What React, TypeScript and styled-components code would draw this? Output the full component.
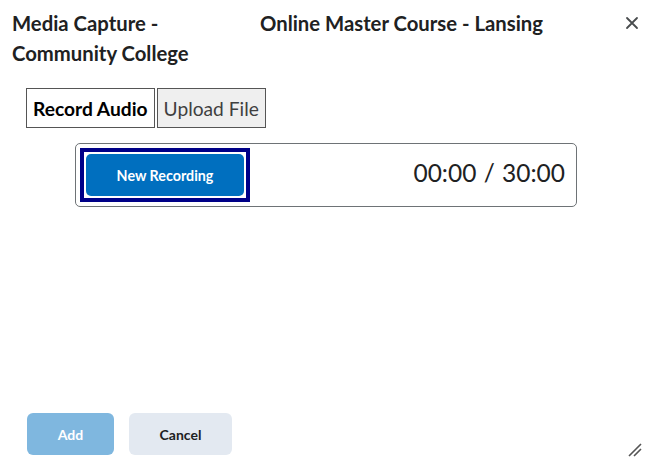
import React, {useState} from 'react';
import styled, {createGlobalStyle} from "styled-components";

const GlobalStyle = createGlobalStyle`
  html, body {
    margin: 0;
    padding: 0;
    background-color: #FFFFFF;
  }
  body {
    font-family: Lato, "Noto Sans", sans-serif;
    color: #202122;
  }
  * {
    box-sizing: border-box;
  }
`;

const DialogWrapper = styled('div')`
  position: relative;
  width: 656px;
  height: 468px;
  display: flex;
  flex-direction: column;
  background-color: #FFFFFF;
`;

const Header = styled('div')`
  display: flex;
  align-items: flex-start;
  padding: 8px 12px 0 12px;
`;

const TitleRow = styled('div')`
  flex: 1;
  display: flex;
  gap: 38px;
`;

const TitlePart = styled('h1')<{ $width?: number }>`
  margin: 0;
  width: ${p => (p.$width ? `${p.$width}px` : 'auto')};
  font-size: 20.3px;
  line-height: 30px;
  font-weight: 700;
  color: #202122;
`;

const CloseButton = styled('button')`
  width: 24px;
  height: 24px;
  margin-top: 3px;
  padding: 0;
  border: unset;
  background: transparent;
  display: flex;
  align-items: center;
  justify-content: center;
  color: #494C4E;
  cursor: pointer;
`;

const Body = styled('div')`
  flex: 1;
  padding: 20px 0 0 26px;
`;

const Tabs = styled('div')`
  display: flex;
  gap: 2px;
`;

const Tab = styled('button')<{ $active: boolean }>`
  height: 40px;
  padding: 0 6px 0 6px;
  border: 1.5px solid #555555;
  background-color: ${p => (p.$active ? '#FFFFFF' : '#EFEFEF')};
  color: ${p => (p.$active ? '#000000' : '#3F3F3F')};
  font-family: Lato, sans-serif;
  font-size: 19.2px;
  font-weight: ${p => (p.$active ? 700 : 400)};
  cursor: pointer;
`;

const Recorder = styled('div')`
  margin: 15px 0 0 49px;
  width: 502px;
  height: 64px;
  border: 1px solid #6E7376;
  border-radius: 5px;
  display: flex;
  align-items: center;
  justify-content: space-between;
  padding: 0 11px 0 4px;
`;

const FocusRing = styled('div')`
  border: 4px solid #000088;
  padding: 2px;
  background-color: #FFFFFF;
  display: flex;
`;

const RecordButton = styled('button')`
  width: 158px;
  height: 42px;
  border: unset;
  border-radius: 5px;
  background-color: #006FBF;
  color: #FFFFFF;
  font-family: Lato, sans-serif;
  font-size: 14.3px;
  font-weight: 700;
  outline: none;
  cursor: pointer;
`;

const Timer = styled('div')`
  font-family: Lato, sans-serif;
  font-size: 24.5px;
  font-weight: 400;
  color: #202122;
  word-spacing: 1px;
  padding-bottom: 5px;
`;

const Footer = styled('div')`
  display: flex;
  gap: 15px;
  padding: 0 0 13px 27px;
`;

const FooterButton = styled('button')<{ $primary?: boolean }>`
  height: 42px;
  width: ${p => (p.$primary ? '87px' : '103px')};
  border: unset;
  border-radius: 6px;
  background-color: ${p => (p.$primary ? '#7FB7DF' : '#E3E9F1')};
  color: ${p => (p.$primary ? '#FFFFFF' : '#202122')};
  font-family: Lato, sans-serif;
  font-size: 14px;
  font-weight: 700;
  cursor: pointer;
`;

const ResizeGrip = styled('svg')`
  position: absolute;
  right: 14px;
  bottom: 11px;
`;

const App = () => {
    const [tab, setTab] = useState<'record' | 'upload'>('record')

    return (
        <DialogWrapper>
            <GlobalStyle/>
            <Header>
                <TitleRow>
                    <TitlePart $width={210}>Media Capture - Community College</TitlePart>
                    <TitlePart>Online Master Course - Lansing</TitlePart>
                </TitleRow>
                <CloseButton aria-label="Close">
                    <svg width="14" height="14" viewBox="0 0 14 14">
                        <path d="M2 2 L12 12 M12 2 L2 12" stroke="currentColor" strokeWidth="1.8" strokeLinecap="round"/>
                    </svg>
                </CloseButton>
            </Header>
            <Body>
                <Tabs>
                    <Tab $active={tab === 'record'} onClick={() => setTab('record')}>Record Audio</Tab>
                    <Tab $active={tab === 'upload'} onClick={() => setTab('upload')}>Upload File</Tab>
                </Tabs>
                <Recorder>
                    <FocusRing>
                        <RecordButton>New Recording</RecordButton>
                    </FocusRing>
                    <Timer>00:00 / 30:00</Timer>
                </Recorder>
            </Body>
            <Footer>
                <FooterButton $primary disabled>Add</FooterButton>
                <FooterButton>Cancel</FooterButton>
            </Footer>
            <ResizeGrip width="14" height="14" viewBox="0 0 14 14">
                <path d="M1 13 L13 1 M6 13 L13 6" stroke="#555555" strokeWidth="1.6"/>
            </ResizeGrip>
        </DialogWrapper>
    );
};

export default App;
